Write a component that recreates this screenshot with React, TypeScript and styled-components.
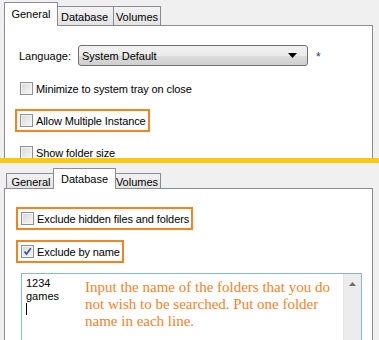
import React from 'react'
import styled, { createGlobalStyle, css } from 'styled-components'

const GlobalStyle = createGlobalStyle`
    body {
        margin: 0;
        background: #f0f0f0;
        font-family: "Liberation Sans", Arial, sans-serif;
        font-size: 11px;
        color: #000;
    }
`

const UI_BORDER = '#898c95'
const ORANGE = '#f5841f'

const TAB_WIDTHS: Record<string, number> = { General: 50, Database: 59, Volumes: 48 }

function Tabs(props: { active: string, low?: boolean }) {
    const { active, low } = props
    return (
        <TabRow $low={low}>
            {['General', 'Database', 'Volumes'].map(name => (
                <Tab key={name} $active={name === active} $low={low} $w={TAB_WIDTHS[name]}>
                    {name}
                </Tab>
            ))}
        </TabRow>
    )
}

function CheckBox(props: { checked?: boolean }) {
    return (
        <Box>
            {props.checked &&
                <svg width="9" height="9" viewBox="0 0 9 9">
                    <path d="M1.5 4.5 L3.5 7 L7.8 1.2" fill="none" stroke="#41549a" strokeWidth="1.7" />
                </svg>
            }
        </Box>
    )
}

function Option(props: { label: string, checked?: boolean, marked?: boolean }) {
    const row = (
        <CheckRow>
            <CheckBox checked={props.checked} />
            <span>{props.label}</span>
        </CheckRow>
    )
    return props.marked ? <Marker>{row}</Marker> : row
}

function App() {
    return (
        <Screen>
            <GlobalStyle />
            <Section $h={158}>
                <Tabs active="General" />
                <Panel>
                    <GeneralBody>
                        <LangRow>
                            <LangLabel>Language:</LangLabel>
                            <Select>
                                <span>System Default</span>
                                <svg width="9" height="5" viewBox="0 0 9 5">
                                    <path d="M0 0 H9 L4.5 5 Z" fill="#000" />
                                </svg>
                            </Select>
                            <Asterisk>*</Asterisk>
                        </LangRow>
                        <Options $gap={12} $top={14}>
                            <Option label="Minimize to system tray on close" />
                            <Option label="Allow Multiple Instance" marked />
                            <Option label="Show folder size" />
                        </Options>
                    </GeneralBody>
                </Panel>
            </Section>
            <Divider />
            <Section $h={177} $top={5}>
                <Tabs active="Database" low />
                <Panel>
                    <DatabaseBody>
                        <Options $gap={10} $top={0}>
                            <Option label="Exclude hidden files and folders" marked />
                            <Option label="Exclude by name" checked marked />
                        </Options>
                        <NameList>
                            <ListText>
                                1234<br />games<br /><Caret />
                            </ListText>
                            <Hint>
                                Input the name of the folders that you do not wish to be searched. Put one folder name in each line.
                            </Hint>
                            <ScrollBar>
                                <svg width="7" height="4" viewBox="0 0 7 4">
                                    <path d="M0 4 L3.5 0 L7 4 Z" fill="#6d6d6d" />
                                </svg>
                            </ScrollBar>
                        </NameList>
                    </DatabaseBody>
                </Panel>
            </Section>
        </Screen>
    )
}

const Screen = styled.div`
    width: 379px;
    height: 340px;
    overflow: hidden;
    background: #f0f0f0;
`

const Section = styled.div<{ $h: number, $top?: number }>`
    height: ${p => p.$h}px;
    overflow: hidden;
    padding: ${p => p.$top ?? 2}px 6px 0 4px;
    box-sizing: border-box;
`

const Divider = styled.div`
    height: 5px;
    background: #fcc812;
`

const TabRow = styled.div<{ $low?: boolean }>`
    display: flex;
    align-items: flex-end;
    height: ${p => p.$low ? 21 : 24}px;
    padding-left: 2px;
    position: relative;
    z-index: 1;
`

const Tab = styled.div<{ $active: boolean, $low?: boolean, $w: number }>`
    box-sizing: border-box;
    width: ${p => p.$w}px;
    height: ${p => p.$low ? 15 : 19}px;
    margin: 0 -1px 1px 0;
    border: 1px solid ${UI_BORDER};
    border-bottom: none;
    background: linear-gradient(#f3f3f3, #e3e3e3);
    display: flex;
    align-items: center;
    justify-content: center;
    padding-top: ${p => p.$low ? 1 : 2}px;
    ${p => p.$active && css`
        width: ${p.$w + 4}px;
        height: ${p.$low ? 21 : 24}px;
        margin: 0 -3px 0 -2px;
        background: #fff;
        position: relative;
        z-index: 2;
        align-items: ${p.$low ? 'center' : 'flex-start'};
        padding-top: ${p.$low ? 0 : 5}px;
    `}
`

const Panel = styled.div`
    margin-top: -1px;
    border: 1px solid ${UI_BORDER};
    background: #fff;
    height: 400px;
`

const GeneralBody = styled.div`
    padding: 19px 0 0 15px;
`

const LangRow = styled.div`
    display: flex;
    align-items: center;
    height: 21px;
`

const LangLabel = styled.span`
    width: 59px;
    margin-left: -1px;
`

const Select = styled.div`
    box-sizing: border-box;
    width: 230px;
    height: 21px;
    border: 1px solid #707070;
    border-radius: 3px;
    background: linear-gradient(#f2f2f2 0%, #ebebeb 50%, #dddddd 51%, #cfcfcf 100%);
    display: flex;
    align-items: center;
    justify-content: space-between;
    padding: 0 10px 0 3px;
`

const Asterisk = styled.span`
    margin: 3px 0 0 8px;
    color: #1f3b6a;
    font-size: 12px;
`

const Options = styled.div<{ $gap: number, $top: number }>`
    display: flex;
    flex-direction: column;
    align-items: flex-start;
    gap: ${p => p.$gap}px;
    margin-top: ${p => p.$top}px;
`

const CheckRow = styled.label`
    display: flex;
    align-items: center;
    gap: 3px;
    height: 17px;
    white-space: nowrap;
    letter-spacing: -0.1px;
`

const Marker = styled.div`
    border: 2px solid ${ORANGE};
    padding: 1px 2px 1px 3px;
    margin-left: -5px;
`

const Box = styled.span`
    box-sizing: border-box;
    width: 13px;
    height: 13px;
    border: 1px solid #8e8f8f;
    box-shadow: inset 0 0 0 1px #f4f4f4;
    background: linear-gradient(135deg, #d6d6d6, #f8f8f8);
    display: flex;
    align-items: center;
    justify-content: center;
`

const DatabaseBody = styled.div`
    padding: 18px 0 0 16px;
`

const NameList = styled.div`
    position: relative;
    box-sizing: border-box;
    width: 341px;
    height: 90px;
    margin-top: 10px;
    border: 1px solid #84b5e4;
    background: #fff;
    display: flex;
    justify-content: space-between;
`

const ListText = styled.div`
    padding: 3px 0 0 4px;
    line-height: 13px;
`

const Caret = styled.span`
    display: inline-block;
    width: 1px;
    height: 12px;
    background: #000;
    vertical-align: top;
`

const Hint = styled.div`
    position: absolute;
    left: 63px;
    top: 5px;
    width: 250px;
    font-family: "Liberation Serif", "Times New Roman", serif;
    font-size: 15px;
    line-height: 17px;
    color: #f1832c;
`

const ScrollBar = styled.div`
    width: 17px;
    background: #ececec;
    border-left: 1px solid #e4e4e4;
    display: flex;
    justify-content: center;
    padding-top: 8px;
`

export default App
